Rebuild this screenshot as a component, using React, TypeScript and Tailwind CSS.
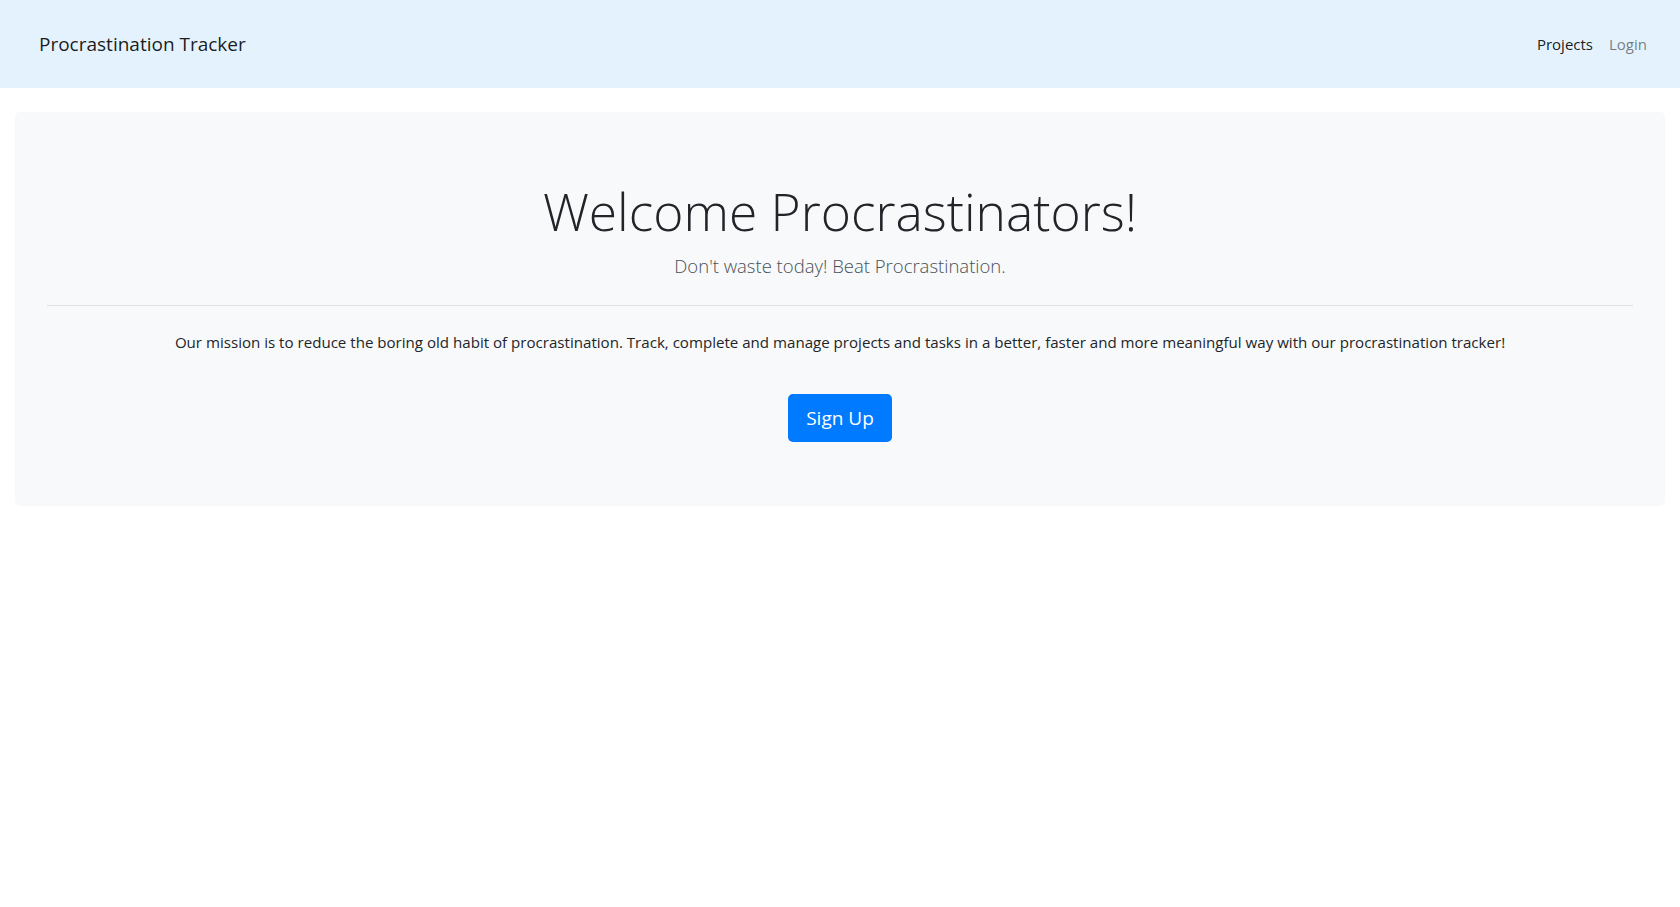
import React from 'react'

export default function App() {
  const font = { fontFamily: '"Open Sans", "Noto Sans", Arial, sans-serif' }

  return (
    <div className="min-h-screen bg-white text-[#212529]" style={font}>
      <nav className="h-[88px] bg-[#e3f2fd] flex items-center justify-between pl-[39px] pr-[25px]">
        <a className="text-[19px] leading-[30px] text-black/90">Procrastination Tracker</a>
        <ul className="flex items-center">
          <li>
            <a className="block px-2 text-[15px] leading-6 text-black/90">Projects</a>
          </li>
          <li>
            <a className="block px-2 text-[15px] leading-6 text-black/50">Login</a>
          </li>
        </ul>
      </nav>

      <div className="px-[15px] pt-6">
        <div className="bg-[#f8f9fa] rounded-[5px] px-8 pt-16 pb-16 flex flex-col items-center text-center">
          <h1 className="text-[51.5px] leading-[67px] font-light pt-[2px] mb-[6px]">Welcome Procrastinators!</h1>
          <p className="text-[18.5px] leading-[30px] font-light text-[#495057]">
            Don't waste today! Beat Procrastination.
          </p>
          <hr className="w-full mt-6 border-t border-black/10" />
          <p className="mt-6 text-[15.1px] leading-6">
            Our mission is to reduce the boring old habit of procrastination. Track, complete and manage projects and tasks in a better, faster and more meaningful way with our procrastination tracker!
          </p>
          <button className="mt-10 h-12 px-[18px] rounded-[5px] bg-[#007bff] text-white text-[19px] leading-[30px]">
            Sign Up
          </button>
        </div>
      </div>
    </div>
  )
}
